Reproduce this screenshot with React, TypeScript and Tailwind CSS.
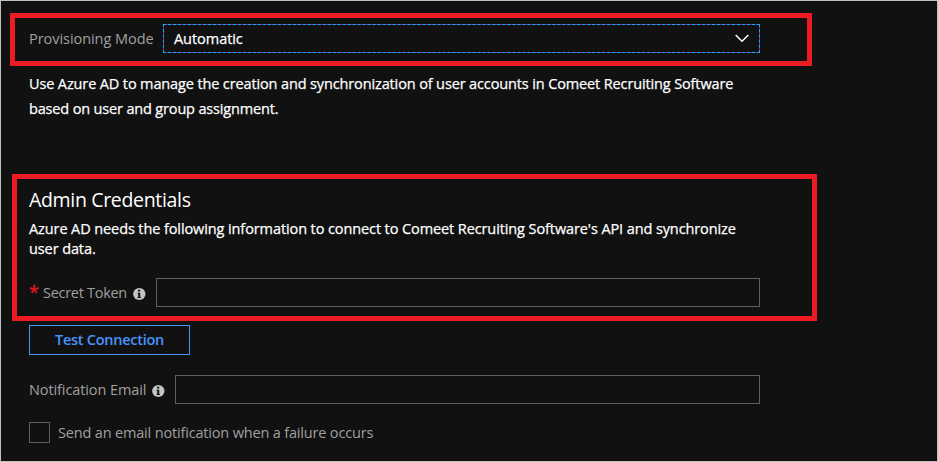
import React from "react";

function InfoIcon() {
  return (
    <svg width="13" height="12" viewBox="0 0 13 12" className="block shrink-0">
      <ellipse cx="6.3" cy="6" rx="6.2" ry="6" fill="#c4c4c4" />
      <path d="M5 1.8h2.2v1.7H5zM4.5 4.7h2.7v4.2h.8V10H4.5V8.9h.7V5.8h-.7z" fill="#111" />
    </svg>
  );
}

export default function App() {
  return (
    <div
      className="h-[462px] w-[938px] overflow-hidden border border-[#c0c2c1] bg-[#111111] text-[14.5px] leading-5 whitespace-nowrap text-white"
      style={{ fontFamily: '"Segoe UI", "Open Sans", "Noto Sans", sans-serif' }}
    >
      <section className="mt-3 ml-[9px] flex h-[53px] w-[802px] border-[5px] border-[#ed1c24] pt-[6px] pl-[14px]">
        <label className="w-[134px] pt-[5px] tracking-[-0.05px] text-[#a0a0a0]"><span>Provisioning Mode</span></label>
        <div className="flex h-[29px] w-[597px] items-center justify-between border border-[#8c1c96] pr-[10px] pl-[10px] outline-1 -outline-offset-1 outline-[#00b7f4] outline-dashed">
          <span className="tracking-[-0.05px] [-webkit-text-stroke:0.25px_white]">Automatic</span>
          <svg width="14" height="9" viewBox="0 0 14 9" fill="none" stroke="white" strokeWidth="1.5">
            <path d="M.7 1 7 7.3 13.3 1" />
          </svg>
        </div>
      </section>

      <p className="mt-[5px] ml-7 h-[103px] leading-[25px] [-webkit-text-stroke:0.25px_white]">
        <span className="tracking-[-0.13px]">Use Azure AD to manage the creation and synchronization of user accounts in Comeet Recruiting Software</span>
        <br />
        <span className="tracking-[-0.16px]">based on user and group assignment.</span>
      </p>

      <section className="ml-[11px] h-[147px] w-[805px] border-[5px] border-[#ed1c24] pl-3">
        <h2 className="mt-[7px] h-[33px] text-[19.5px] leading-7 tracking-[-0.33px]"><span>Admin Credentials</span></h2>
        <p className="h-[59px] tracking-[-0.1px] [-webkit-text-stroke:0.25px_white]">
          <span>Azure AD needs the following information to connect to Comeet Recruiting Software's API and synchronize</span>
          <br />
          <span>user data.</span>
        </p>
        <div className="flex h-[29px]">
          <span className="w-[14px] pt-1 text-[18px] text-[#e01b24] [-webkit-text-stroke:0.3px_#e01b24]">*</span>
          <label className="w-[90px] pt-[5px] tracking-[-0.29px] text-[#a0a0a0]"><span>Secret Token</span></label>
          <div className="w-[23px] pt-[10px]"><InfoIcon /></div>
          <input className="h-[29px] w-[604px] border border-[#606060] bg-transparent outline-none" />
        </div>
      </section>

      <div className="pl-7">
        <button className="mt-1 block h-[30px] w-[161px] border border-[#4894fe] font-semibold tracking-[-0.27px] text-[#4894fe]">
          <span>Test Connection</span>
        </button>
        <div className="mt-5 flex h-[29px]">
          <label className="w-[123px] pt-[5px] tracking-[-0.1px] text-[#a0a0a0]"><span>Notification Email</span></label>
          <div className="w-[23px] pt-[10px]"><InfoIcon /></div>
          <input className="h-[29px] w-[585px] border border-[#606060] bg-transparent outline-none" />
        </div>
        <label className="mt-[18px] flex h-[21px] items-center tracking-[-0.17px] text-[#a0a0a0]">
          <span className="mr-2 block h-[21px] w-[21px] border border-[#606060]" />
          <span>Send an email notification when a failure occurs</span>
        </label>
      </div>
    </div>
  );
}
